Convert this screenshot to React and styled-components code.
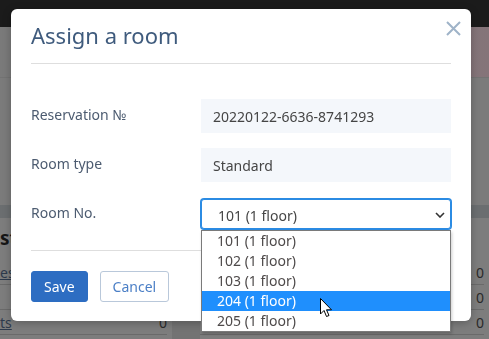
import React from 'react'
import styled, { createGlobalStyle } from 'styled-components'

const GlobalStyle = createGlobalStyle`
	html, body {
		margin: 0;
		padding: 0;
		overflow: hidden;
		background: #7c7c7c;
		font-family: "Noto Sans", "Open Sans", sans-serif;
	}
`

// dimmed page behind the modal
const Page = styled.div`
	width: 489px;
	height: 339px;
	display: flex;
	flex-direction: column;
	overflow: hidden;
`

const TopBar = styled.div`
	height: 27px;
	background: #1b1b1b;
`

const SubBar = styled.div`
	height: 50px;
	background: linear-gradient(90deg, #7a7a7a 0%, #7c7a7b 60%, #857479 100%);
	border-bottom: 1px solid #737373;
`

const MainArea = styled.div`
	height: 127px;
	background: #7b7b7b;
`

const Strip = styled.div`
	height: 13px;
	background: #6b6e70;
`

const Content = styled.div`
	flex: 1;
	display: grid;
	grid-template-columns: 172px 28px 1fr;
	background: #7d7d7d;
`

const Gutter = styled.div`
	background: #737373;
`

const Panel = styled.div`
	display: flex;
	flex-direction: column;
	padding: ${p => p.$top}px 5px 0 0;
`

const PanelTitle = styled.div`
	font-size: 19px;
	font-weight: 700;
	color: #161616;
	height: 42px;
	line-height: 40px;
`

const PanelRow = styled.div`
	display: flex;
	justify-content: space-between;
	align-items: center;
	height: 24px;
	border-bottom: 1px solid #6a6a6a;
	font-size: 14px;
	color: #2a2a2a;
`

const PanelLink = styled.span`
	color: #2e3a4c;
	text-decoration: underline;
`

const Backdrop = styled.div`
	position: fixed;
	inset: 0;
	padding: 9px 0 0 11px;
`

const Modal = styled.div`
	position: relative;
	width: 460px;
	background: #fff;
	border-radius: 6px;
	box-shadow: 0 2px 8px rgba(0, 0, 0, 0.25);
`

const Header = styled.div`
	margin: 0 20px;
	padding: 10px 0 12px;
	border-bottom: 1px solid #dedede;
`

const Title = styled.h2`
	margin: 0;
	font-size: 22px;
	line-height: 32px;
	font-weight: 400;
	color: #3f5b7d;
`

const CloseButton = styled.button`
	position: absolute;
	top: 12px;
	right: 10px;
	width: 15px;
	height: 15px;
	padding: 0;
	border: 0;
	background: none;
	cursor: pointer;
	svg {
		display: block;
	}
`

const Body = styled.div`
	margin: 0 20px;
	padding: 35px 0 19px;
	border-bottom: 1px solid #dedede;
	display: grid;
	grid-template-columns: 170px 250px;
	grid-auto-rows: 34px;
	row-gap: 15px;
	align-items: center;
`

const Label = styled.div`
	font-size: 14px;
	color: #4c5b70;
	padding-bottom: 3px;
`

const Field = styled.div`
	height: 34px;
	display: flex;
	align-items: center;
	padding-left: 12px;
	background: #f4f7fb;
	font-size: 14px;
	color: #454545;
	box-sizing: border-box;
`

const SelectWrap = styled.div`
	position: relative;
	height: 30px;
`

const SelectBox = styled.div`
	height: 30px;
	box-sizing: border-box;
	display: flex;
	align-items: center;
	justify-content: space-between;
	padding: 2px 5px 0 16px;
	border: 1px solid #2b8be3;
	box-shadow: 0 0 0 1px #2b8be3;
	border-radius: 3px;
	font-size: 14px;
	color: #454545;
	background: #fff;
`

const OptionList = styled.ul`
	position: absolute;
	top: 31px;
	left: 0;
	width: 250px;
	box-sizing: border-box;
	margin: 0;
	padding: 0;
	list-style: none;
	background: #fff;
	border: 1px solid #7a7a7a;
	box-shadow: 1px 2px 3px rgba(0, 0, 0, 0.2);
	z-index: 2;
`

const Option = styled.li`
	position: relative;
	height: 20px;
	line-height: 20px;
	padding-left: 15px;
	font-size: 14px;
	color: ${p => (p.$active ? '#fff' : '#4e4a4a')};
	background: ${p => (p.$active ? '#1f8ffd' : 'transparent')};
`

const Cursor = styled.svg`
	position: absolute;
	left: 118px;
	top: 7px;
`

const Footer = styled.div`
	display: flex;
	gap: 12px;
	padding: 20px 20px 19px;
`

const Button = styled.button`
	height: 31px;
	padding: 0 12px;
	border-radius: 3px;
	font-family: inherit;
	font-size: 14px;
	cursor: pointer;
	border: 1px solid ${p => (p.$primary ? '#2d6dc2' : '#b9c8da')};
	background: ${p => (p.$primary ? '#2d6dc2' : '#fff')};
	color: ${p => (p.$primary ? '#fff' : '#4b7fc6')};
`

const rooms = ['101 (1 floor)', '102 (1 floor)', '103 (1 floor)', '204 (1 floor)', '205 (1 floor)']

export default function App() {
	return (
		<>
			<GlobalStyle />
			<Page>
				<TopBar />
				<SubBar />
				<MainArea />
				<Strip />
				<Content>
					<Panel $top={0}>
						<PanelTitle>st</PanelTitle>
						<PanelRow><PanelLink>es</PanelLink></PanelRow>
						<PanelRow />
						<PanelRow><PanelLink>ts</PanelLink><span>0</span></PanelRow>
					</Panel>
					<Gutter />
					<Panel $top={42}>
						<PanelRow><span /><span>0</span></PanelRow>
						<PanelRow><span /><span>0</span></PanelRow>
						<PanelRow><span /><span>0</span></PanelRow>
					</Panel>
				</Content>
			</Page>

			<Backdrop>
				<Modal>
					<Header>
						<Title>Assign a room</Title>
					</Header>
					<CloseButton aria-label="Close">
						<svg width="15" height="15" viewBox="0 0 15 15">
							<path d="M1 1 L14 14 M14 1 L1 14" stroke="#9fb3c8" strokeWidth="2" fill="none" />
						</svg>
					</CloseButton>

					<Body>
						<Label>Reservation №</Label>
						<Field>20220122-6636-8741293</Field>

						<Label>Room type</Label>
						<Field>Standard</Field>

						<Label>Room No.</Label>
						<SelectWrap>
							<SelectBox>
								<span>101 (1 floor)</span>
								<svg width="10" height="6" viewBox="0 0 10 6">
									<path d="M1 1 L5 5 L9 1" stroke="#333" strokeWidth="1.6" fill="none" />
								</svg>
							</SelectBox>
							<OptionList>
								{rooms.map((r, i) => (
									<Option key={r} $active={i === 3}>
										{r}
										{i === 3 && (
											<Cursor width="13" height="21" viewBox="0 0 13 21">
												<path d="M0.5 0.5 L0.5 16 L4 12.5 L6.5 18.5 L9 17.5 L6.5 11.8 L11.5 11.8 Z" fill="#fff" stroke="#000" strokeWidth="1" />
											</Cursor>
										)}
									</Option>
								))}
							</OptionList>
						</SelectWrap>
					</Body>

					<Footer>
						<Button $primary>Save</Button>
						<Button>Cancel</Button>
					</Footer>
				</Modal>
			</Backdrop>
		</>
	)
}
